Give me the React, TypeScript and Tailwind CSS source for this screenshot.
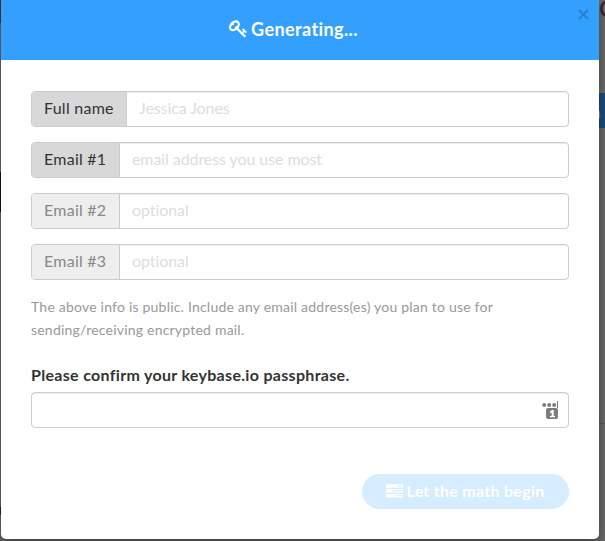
import React from "react";

function KeyIcon() {
  return (
    <svg viewBox="0 0 1792 1792" className="h-[19px] w-[19px] shrink-0 fill-current" aria-hidden="true">
      <path d="M832 512q0-80-56-136t-136-56-136 56-56 136q0 42 19 83-41-19-83-19-80 0-136 56t-56 136 56 136 136 56 136-56 56-136q0-42-19-83 41 19 83 19 80 0 136-56t56-136zm851 704q0 17-49 66t-66 49q-9 0-28.500-16t-36.500-33-38.500-40-24.500-26l-96 96 220 220q28 28 28 68 0 42-39 81t-81 39q-40 0-68-28l-671-671q-176 131-365 131-163 0-265.500-102.500t-102.500-265.500q0-160 95-313t248-248 313-95q163 0 265.500 102.500t102.500 265.500q0 189-131 365l355 355 96-96q-3-3-26-24.500t-40-38.500-33-36.500-16-28.500q0-17 49-66t66-49q13 0 23 10 6 6 46 44.500t82 79.500 86.500 86 73 78 28.500 41z" />
    </svg>
  );
}

function TasksIcon() {
  return (
    <svg viewBox="0 0 1792 1792" className="h-[17px] w-[17px] shrink-0 fill-current" aria-hidden="true">
      <path d="M1024 1408h640v-128h-640v128zm-384-512h1024v-128h-1024v128zm640-512h384v-128h-384v128zm512 832v256q0 26-19 45t-45 19h-1664q-26 0-45-19t-19-45v-256q0-26 19-45t45-19h1664q26 0 45 19t19 45zm0-512v256q0 26-19 45t-45 19h-1664q-26 0-45-19t-19-45v-256q0-26 19-45t45-19h1664q26 0 45 19t19 45zm0-512v256q0 26-19 45t-45 19h-1664q-26 0-45-19t-19-45v-256q0-26 19-45t45-19h1664q26 0 45 19t19 45z" />
    </svg>
  );
}

function PassphraseIcon() {
  return (
    <svg viewBox="0 0 17 18" className="h-[18px] w-[17px]" aria-hidden="true">
      <g fill="#7d7d7d">
        <circle cx="2.200" cy="4" r="2" />
        <circle cx="7.200" cy="4" r="2" />
        <circle cx="12.200" cy="4" r="2" />
        <rect x="15" y="0" width="1" height="7" />
        <rect x="4" y="7" width="12" height="11" rx="2" />
      </g>
      <path d="M8 10.800 10 9h1.700v6H13v1.300H8V15h1.600v-3.600L8 12z" fill="#fff" />
    </svg>
  );
}

type FieldProps = { label: string; placeholder: string; muted?: boolean; wide?: boolean };

function Field({ label, placeholder, muted, wide }: FieldProps) {
  return (
    <label className="flex h-9 overflow-hidden rounded-[4px] border border-[#ccc] bg-white">
      <span
        className={`flex shrink-0 items-center border-r border-[#ccc] pb-[2px] pl-3 tracking-[0.25px] ${wide ? "w-[95px]" : "w-[88px]"} ${
          muted ? "bg-[#eee] text-[#888]" : "bg-[#d8d8d8] text-[#333]"
        }`}
      >
        {label}
      </span>
      <input
        className="min-w-0 flex-1 px-3 pb-[2px] tracking-[-0.08px] shadow-[inset_0_1px_1px_rgba(0,0,0,0.075)] outline-none placeholder:text-[#ddd] placeholder:opacity-100"
        placeholder={placeholder}
      />
    </label>
  );
}

export default function App() {
  return (
    <div className="relative h-[541px] w-[605px] overflow-hidden bg-[#6b6b6b] pl-px font-['Lato',sans-serif] text-[16px] text-[#333]">
      <div className="absolute left-0 top-0 h-[23px] w-px bg-[#4a3b29]" />
      <div className="absolute left-0 top-[172px] h-10 w-px bg-[#171717]" />
      <div className="absolute left-0 top-[507px] h-2 w-px bg-[#20252c]" />
      <div className="absolute right-0 top-[93px] h-[35px] w-[6px] bg-[#1b4d7c]">
        <span className="absolute -left-[7px] top-[9px] text-[16px] leading-5 text-[#8b8b8b]">n</span>
      </div>
      <div className="absolute -right-[10px] -top-[7px] text-[24px] leading-[30px] text-[#292929]">C</div>
      <div className="absolute right-0 top-[423px] h-px w-[6px] bg-[#5a5a5a]" />

      <main className="relative h-[539px] w-[598px] overflow-hidden rounded-b-[5px] rounded-tr-[2px] bg-white shadow-[0_4px_12px_rgba(0,0,0,0.45)]">
        <header className="relative flex h-[60px] items-center justify-center bg-[#339fff] pb-[3px] pr-[13px] text-white">
          <h1 className="flex items-center gap-[3px] text-[18px] font-bold leading-6 tracking-[0.4px]">
            <KeyIcon />
            Generating...
          </h1>
          <button aria-label="Close" className="absolute right-[10px] top-[9px] h-[11px] w-[11px] text-[#297fcc]">
            <svg viewBox="0 0 11 11" className="h-full w-full stroke-current" fill="none">
              <path d="m1 1 9 9M10 1 1 10" strokeWidth="1.8" />
            </svg>
          </button>
        </header>

        <form className="flex flex-col px-[30px] pt-[31px]">
          <div className="flex flex-col gap-[15px]">
            <Field label="Full name" placeholder="Jessica Jones" wide />
            <Field label="Email #1" placeholder="email address you use most" />
            <Field label="Email #2" placeholder="optional" muted />
            <Field label="Email #3" placeholder="optional" muted />
          </div>
          <p className="mt-[15px] text-[14px] leading-[23px] tracking-[0.21px] text-[#999]">
            The above info is public. Include any email address(es) you plan to use for
            <br />
            sending/receiving encrypted mail.
          </p>
          <label htmlFor="passphrase" className="mt-[22px] text-[16px] font-bold leading-6 tracking-[0.31px]">
            Please confirm your keybase.io passphrase.
          </label>
          <div className="mt-[5px] flex h-9 items-center rounded-[4px] border border-[#ccc] pr-[9px] shadow-[inset_0_1px_1px_rgba(0,0,0,0.075)]">
            <input id="passphrase" type="password" className="h-full min-w-0 flex-1 px-3 outline-none" />
            <PassphraseIcon />
          </div>
          <button
            type="button"
            disabled
            className="mt-[46px] flex h-[35px] w-[207px] items-center justify-center gap-[3px] self-end rounded-full bg-[#d6ecff] pb-px text-[16px] font-bold tracking-[0.28px] text-white"
          >
            <TasksIcon />
            Let the math begin
          </button>
        </form>
      </main>
    </div>
  );
}
